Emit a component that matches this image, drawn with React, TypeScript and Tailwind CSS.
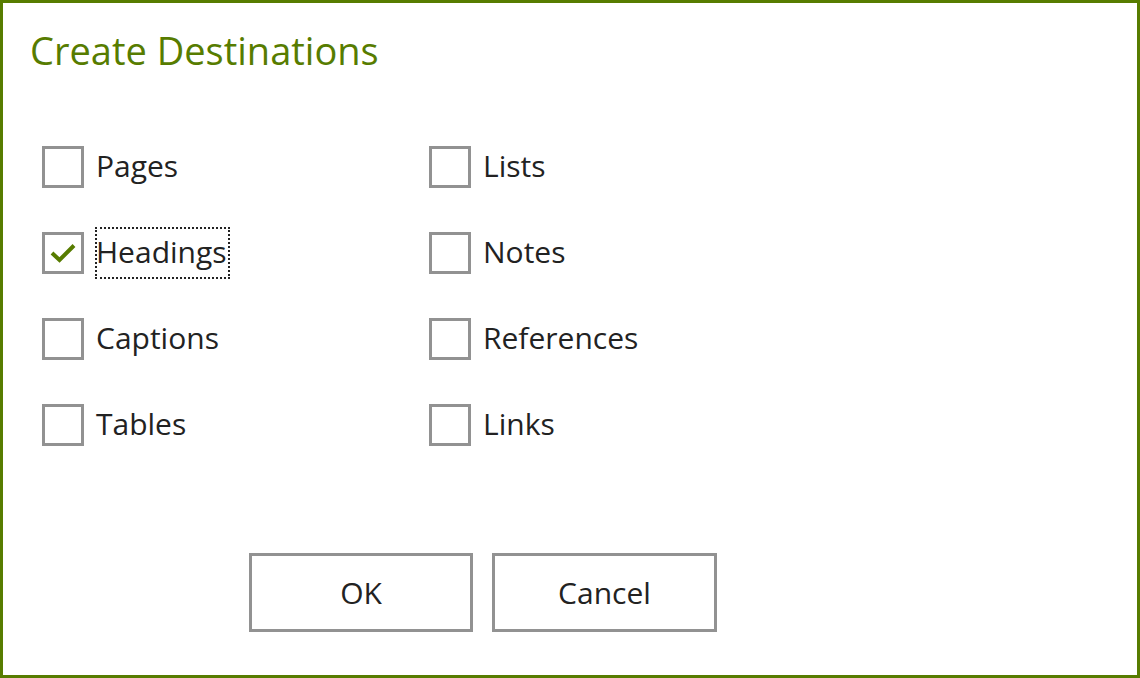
import { useState } from 'react';

const GREEN = 'text-[#577c00]';

const OPTIONS: { label: string; checked?: boolean; focused?: boolean }[][] = [
  [{ label: 'Pages' }, { label: 'Lists' }],
  [{ label: 'Headings', checked: true, focused: true }, { label: 'Notes' }],
  [{ label: 'Captions' }, { label: 'References' }],
  [{ label: 'Tables' }, { label: 'Links' }],
];

function CheckRow({ label, checked, focused }: { label: string; checked?: boolean; focused?: boolean }) {
  const [on, setOn] = useState(!!checked);
  return (
    <button type="button" onClick={() => setOn((v) => !v)} className="flex items-center h-[52px] text-left">
      <span className="w-[42px] h-[42px] border-[3px] border-[#929292] bg-white flex items-center justify-center shrink-0">
        {on && (
          <svg width="26" height="20" viewBox="0 0 26 20" className={GREEN}>
            <path d="M2 10 L9.5 17 L24 2.5" fill="none" stroke="currentColor" strokeWidth="4" />
          </svg>
        )}
      </span>
      <span
        className={`ml-[11px] h-[52px] flex items-center pr-[1px] text-[30px] text-[#222] border-2 border-dotted ${
          focused ? 'border-[#222]' : 'border-transparent'
        }`}
      >
        <span className="-mt-[4px] -ml-[1px]">{label}</span>
      </span>
    </button>
  );
}

export default function App() {
  return (
    <div
      className="w-[1140px] h-[678px] border-[3px] border-[#577c00] bg-white flex flex-col"
      style={{ fontFamily: '"Open Sans", "Noto Sans", sans-serif' }}
    >
      <h1 className={`pl-[27px] pt-[23px] text-[38px] leading-[48px] ${GREEN}`}>Create Destinations</h1>

      <div className="mt-[67px] pl-[39px] flex flex-col gap-[34px]">
        {OPTIONS.map((row, i) => (
          <div key={i} className="grid grid-cols-[387px_1fr]">
            {row.map((o) => (
              <CheckRow key={o.label} {...o} />
            ))}
          </div>
        ))}
      </div>

      <div className="mt-auto mb-[43px] pl-[246px] flex gap-[19px]">
        <button type="button" className="w-[224px] h-[79px] border-[3px] border-[#929292] bg-white text-[30px] text-[#222]">
          OK
        </button>
        <button type="button" className="w-[225px] h-[79px] border-[3px] border-[#929292] bg-white text-[30px] text-[#222]">
          Cancel
        </button>
      </div>
    </div>
  );
}
